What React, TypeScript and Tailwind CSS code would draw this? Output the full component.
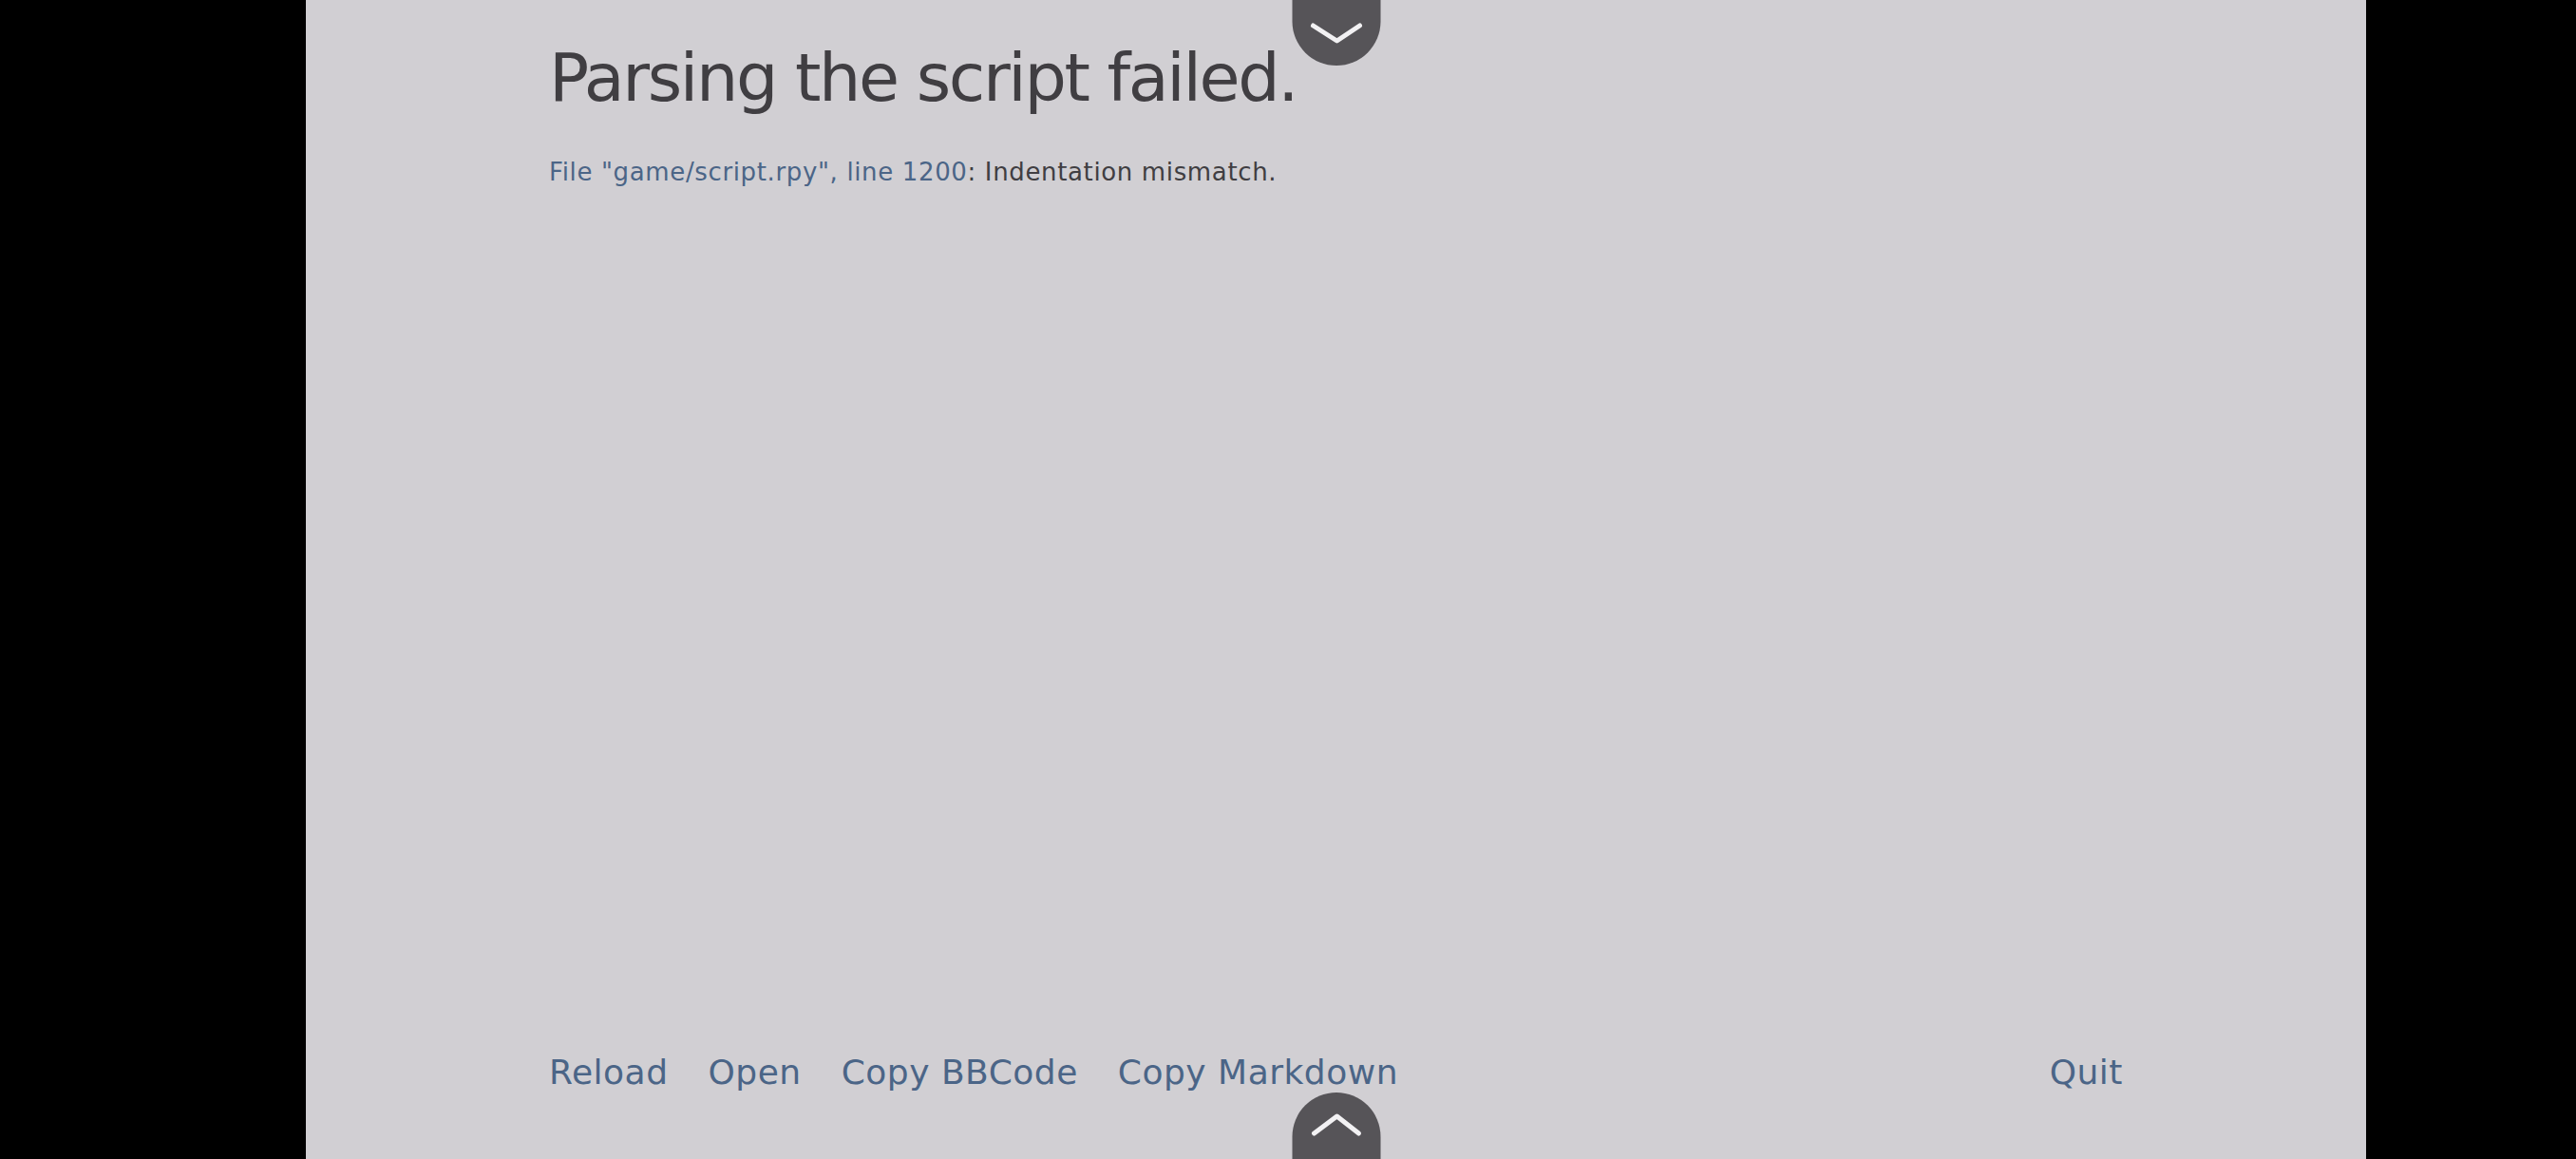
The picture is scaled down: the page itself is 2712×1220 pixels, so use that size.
const font = { fontFamily: '"DejaVu Sans", Verdana, sans-serif' };

const actions = ['Reload', 'Open', 'Copy BBCode', 'Copy Markdown'];

function Chevron({ up }: { up?: boolean }) {
  return (
    <svg width="93" height="70" viewBox="0 0 93 70" fill="none">
      <polyline
        points={up ? '23,43 47,25 70,43' : '22,27 47,43 71,27'}
        stroke="#f2f1f3"
        strokeWidth="5"
        strokeLinecap="round"
        strokeLinejoin="round"
      />
    </svg>
  );
}

export default function App() {
  return (
    <div className="flex h-[1220px] w-[2712px] bg-black" style={font}>
      <div className="w-[322px] shrink-0" />

      {/* Error screen */}
      <div className="relative flex h-full w-[2169px] shrink-0 flex-col bg-[#d1cfd3] px-[256px]">
        {/* Top toggle */}
        <button className="absolute left-1/2 top-0 h-[69px] w-[93px] -translate-x-1/2 overflow-hidden rounded-b-full bg-[#565458]">
          <Chevron />
        </button>

        <h1 className="mt-[47px] text-[70px] leading-[70px] tracking-[-2.35px] text-[#403e42]">
          Parsing the script failed.
        </h1>

        <p className="mt-[51px] text-[26px] leading-[26px] tracking-[0.64px] text-[#403e42]">
          <span className="text-[#4b6587]">File "game/script.rpy", line 1200</span>: Indentation mismatch.
        </p>

        <div className="mt-auto mb-[73px] flex items-center text-[36px] leading-[36px] tracking-[0.5px] text-[#4b6587]">
          <div className="flex items-center gap-[42px]">
            {actions.map((label) => (
              <button key={label}>{label}</button>
            ))}
          </div>
          <button className="ml-auto">Quit</button>
        </div>

        {/* Bottom toggle */}
        <button className="absolute bottom-0 left-1/2 h-[70px] w-[93px] -translate-x-1/2 overflow-hidden rounded-t-full bg-[#565458]">
          <Chevron up />
        </button>
      </div>

      <div className="flex-1" />
    </div>
  );
}
